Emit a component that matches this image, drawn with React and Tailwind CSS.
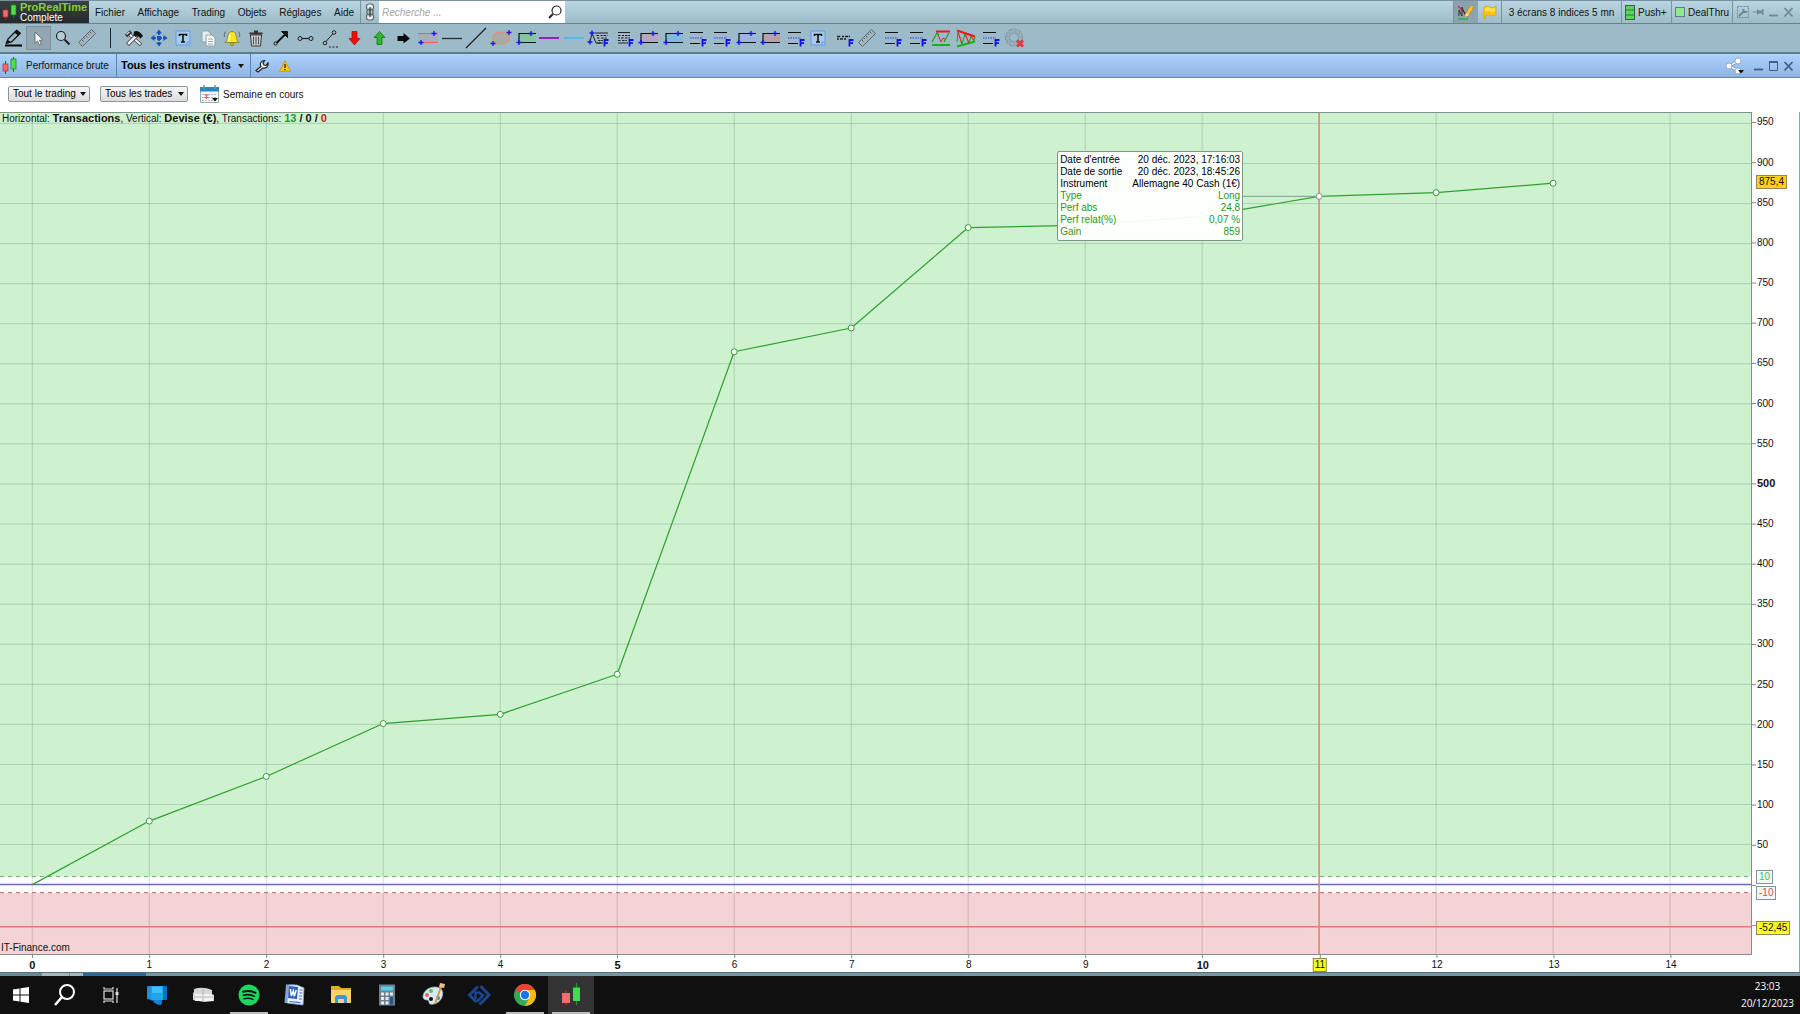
import { useState } from 'react'

const POINTS = [0, 79.3, 135, 201, 212.5, 262.5, 665, 694.7, 820, 823, 834, 859, 863.6, 875.4]
const Y_TICKS = [950, 900, 850, 800, 750, 700, 650, 600, 550, 500, 450, 400, 350, 300, 250, 200, 150, 100, 50]
const X_TICKS = [0, 1, 2, 3, 4, 5, 6, 7, 8, 9, 10, 11, 12, 13, 14]
const Y_MAX = 963
const Y_MIN = -86.6
const SELECTED = 11

const xPct = (n) => `${1.845 + n * 6.681}%`
const yPct = (v) => `${((Y_MAX - v) / (Y_MAX - Y_MIN)) * 100}%`

const MENUS = ['Fichier', 'Affichage', 'Trading', 'Objets', 'Réglages', 'Aide']

const TRADE = [
  ["Date d'entrée", '20 déc. 2023, 17:16:03', false],
  ['Date de sortie', '20 déc. 2023, 18:45:26', false],
  ['Instrument', 'Allemagne 40 Cash (1€)', false],
  ['Type', 'Long', true],
  ['Perf abs', '24,8', true],
  ['Perf relat(%)', '0,07 %', true],
  ['Gain', '859', true],
]

function Icon({ children }) {
  return (
    <svg viewBox="0 0 22 20" className="h-5 w-[22px] shrink-0 overflow-visible" fill="none" aria-hidden="true">
      {children}
    </svg>
  )
}

function Candles({ className }) {
  return (
    <svg viewBox="0 0 16 18" className={className} aria-hidden="true">
      <path d="M3.500 4v13" stroke="#8f2a2a" />
      <rect x="1" y="7" width="5" height="7" fill="#f06a6a" stroke="#a33" strokeWidth=".7" />
      <path d="M11.500 0v15" stroke="#1d7a1d" />
      <rect x="9" y="2" width="5" height="10" fill="#4fe04f" stroke="#197a19" strokeWidth=".7" />
    </svg>
  )
}

// small blue cross marking an anchor of a drawing object
const Cross = ({ x, y }) => <path d={`M${x - 2.5} ${y}h5M${x} ${y - 2.5}v5`} stroke="#1414f0" strokeWidth="1.300" />

const LetterF = () => <path d="M17.500 18.500v-6.500h4M17.500 15.200h3.500" stroke="#1010f0" strokeWidth="1.800" />

const Fibo = () => (
  <Icon>
    <path d="M5 4.500h13M5 15.500h10" stroke="#111" strokeWidth="1.200" />
    <path d="M5 10h13" stroke="#3a3af0" strokeDasharray="1.500 1" />
    <LetterF />
  </Icon>
)

const TextF = () => (
  <Icon>
    <path d="M6 4.500h12M6 15h10" stroke="#222" />
    <path d="M6 7.500h3m1 0h2m1 0h5M6 10h2m1 0h3m1 0h5M6 12.500h3m1 0h5" stroke="#222" strokeDasharray="2.500 .8" />
    <LetterF />
  </Icon>
)

const Box = ({ fill }) => (
  <Icon>
    <rect x="5" y="5.500" width="17" height="9" fill={fill} />
    <path d="M22 5.500H5v9M5 14.500h17" stroke="#111" strokeWidth="1.200" />
    <Cross x={17} y={5.5} />
    <Cross x={5} y={14.5} />
  </Icon>
)

const TextBox = () => (
  <Icon>
    <path d="M4 3h14v14H4zM15 17v-3h3" fill="#a9cbe8" stroke="#5c9af0" />
    <path d="M7.500 8V6.500h7V8M11 6.500V14M9 14h4" stroke="#111" strokeWidth="1.600" />
  </Icon>
)

const Ruler = () => (
  <Icon>
    <path d="M2.500 14.500 15.500 1.500l4 4L6.500 18.500z" fill="#a5b4bc" stroke="#5b6b75" />
    <path d="m5.500 11.500 2 2m0-4 1.300 1.300m.7-3.300 2 2m0-4 1.300 1.300m.7-3.300 2 2" stroke="#4d5c66" />
  </Icon>
)

const TOOLS = [
  ['Dessiner', <Icon><path d="M2 17.500h17" stroke="#000" strokeWidth="2" /><path d="m3.500 15 1.500-4L13.500 2.500 17 5.500 8.500 14z" fill="#9db8c4" stroke="#111" strokeWidth="1.300" /><path d="m3 16 1.500-4.500 3.500 3z" fill="#111" /><path d="m11.500 4.500 3.500 3L18 5l-4-3z" fill="#111" /></Icon>],
  ['Sélection', <Icon><path d="m7 4 8 8-3.600.3 2 4-2 .9-1.900-4.100L7 15.500z" fill="#f5f5f5" stroke="#666" strokeWidth=".9" /></Icon>],
  ['Zoom', <Icon><circle cx="9" cy="8" r="4.500" fill="#b5cdd8" stroke="#222" strokeWidth="1.200" /><path d="m12.500 11.500 5 5" stroke="#222" strokeWidth="2" /></Icon>],
  ['Règle', <Ruler />],
  null,
  ['Outils', <Icon><path d="m5 5 13 12" stroke="#444" strokeWidth="3.500" /><path d="m5 5 12.500 11.500" stroke="#eee" strokeWidth="2" /><path d="M4.500 16.500 14 7" stroke="#333" strokeWidth="4" /><path d="M5 16 13 8" stroke="#eee" strokeWidth="2.500" /><path d="M3 8 8 3.500" stroke="#333" strokeWidth="3.500" /><path d="M3.500 6.500 6.500 4" stroke="#ddd" strokeWidth="1.200" /><path d="M11 3.500c3-1.500 6 0 9 4.500l-2.500 2.500-3-3-2 1.500-2-2z" fill="#111" /></Icon>],
  ['Déplacer', <Icon><path d="M11 5v10M6 10h10" stroke="#123f9c" strokeWidth="1.500" strokeDasharray="2 1" /><path d="m11 1.500 3 4H8zM11 18.500l3-4H8zM2.500 10l4-3v6zM19.500 10l-4-3v6z" fill="#1453bd" /><rect x="9" y="8" width="4" height="4" fill="#1453bd" /></Icon>],
  ['Texte', <TextBox />],
  ['Copier', <Icon><path d="M5 3h6l3 3v8H5z" fill="#e8eef0" stroke="#93a2a8" /><path d="M9 7h6l3 3v8H9z" fill="#f5f7f8" stroke="#93a2a8" /><path d="M11 11h5m-5 2.500h5M11 16h5" stroke="#9aa" /></Icon>],
  ['Alerte', <Icon><path d="M4.500 3.500Q2.500 6 3.500 9M17.500 3.500Q19.500 6 18.500 9" stroke="#58707a" /><path d="M4 14.500c2.500-2 2-4 3-7.500.7-2.500 2-3.500 4-3.500s3.300 1 4 3.500c1 3.500.5 5.500 3 7.500z" fill="#f6e52b" stroke="#8b7a0e" strokeWidth=".8" /><path d="M9 7c-.7 2-.4 4-1.500 6" stroke="#fffac0" strokeWidth="1.500" /><circle cx="11" cy="16.200" r="1.600" fill="#d4b312" stroke="#7d6e12" strokeWidth=".6" /></Icon>],
  ['Supprimer', <Icon><path d="M5.500 7h11l-1 11h-9z" fill="#d9d9d9" stroke="#333" /><path d="M8.500 8.500v8M11 8.500v8M13.500 8.500v8" stroke="#555" strokeWidth="1.200" /><path d="M4.500 5.500h13M9 3.500h4" stroke="#333" strokeWidth="2" /></Icon>],
  ['Flèche', <Icon><path d="M6 15.500 15 6.500" stroke="#111" strokeWidth="1.800" /><path d="M17.500 3.500v6l-6-6z" fill="#111" stroke="#111" /><circle cx="5.500" cy="15.500" r="1.600" fill="#9dbac6" stroke="#111" /></Icon>],
  ['Segment', <Icon><path d="M7 10.500h9" stroke="#222" strokeWidth="1.200" /><circle cx="6" cy="10.500" r="2" fill="#9dbac6" stroke="#222" /><circle cx="17" cy="10.500" r="2" fill="#9dbac6" stroke="#222" /></Icon>],
  ['Demi-droite', <Icon><path d="m7 13.500 7-8" stroke="#222" /><circle cx="6" cy="15" r="1.800" fill="#9dbac6" stroke="#222" /><circle cx="15" cy="4.500" r="1.800" fill="#9dbac6" stroke="#222" /><path d="M10 19h10" stroke="#222" strokeDasharray="2 1.500" /></Icon>],
  ['Flèche baissière', <Icon><path d="M9 3.500h5v7h3L11.500 17 6 10.500h3z" fill="#f80808" stroke="#a41515" strokeWidth=".8" /></Icon>],
  ['Flèche haussière', <Icon><path d="M9 16.500h5v-7h3L11.500 3.500 6 9.500h3z" fill="#2fb52f" stroke="#176f17" strokeWidth=".8" /></Icon>],
  ['Flèche neutre', <Icon><path d="M5.500 8h6V5l6.500 5.500-6.500 5V13h-6z" fill="#0a0a0a" /></Icon>],
  ['Canal', <Icon><path d="M2 5.500h20v9H2z" fill="#a9acba" /><path d="M2 5.500h20M2 14.500h20" stroke="#ee5a62" /><Cross x={18} y={5.5} /><Cross x={5} y={14.5} /></Icon>],
  ['Ligne horizontale', <Icon><path d="M1 10.500h20" stroke="#333" strokeWidth="1.300" /></Icon>],
  ['Ligne oblique', <Icon><path d="M1 20 21 0" stroke="#222" strokeWidth="1.200" /></Icon>],
  ['Ellipse', <Icon><ellipse cx="11" cy="10" rx="8.500" ry="6" fill="#a9abab" stroke="#f08c66" strokeWidth="1.200" /><Cross x={19} y={4.5} /><Cross x={3} y={15.5} /></Icon>],
  ['Rectangle vert', <Box fill="#84c5a6" />],
  ['Ligne violette', <Icon><path d="M1 10h20" stroke="#9410c8" strokeWidth="1.800" /></Icon>],
  ['Ligne bleue', <Icon><path d="M1 10h20" stroke="#45b7f5" strokeWidth="1.500" /></Icon>],
  ['Fourchette', <Icon><path d="M3 14 5 5l4 10h5M8 5h13M10 15h6" stroke="#222" /><path d="M9.500 7.500h3m1 0h2m1 0h4M10 10h3m1 0h6M11 12.500h5" stroke="#222" strokeDasharray="2.500 .8" /><Cross x={5} y={5} /><Cross x={3} y={14} /><LetterF /></Icon>],
  ['Texte de Fibonacci', <TextF />],
  ['Rectangle rose', <Box fill="#b5a6c2" />],
  ['Rectangle bleu', <Box fill="#83bad8" />],
  ['Retracement', <Fibo />],
  ['Extension', <Fibo />],
  ['Zone bleue', <Box fill="#9eb5df" />],
  ['Zone rouge', <Box fill="#b5a2aa" />],
  ['Projection', <Fibo />],
  ['Note', <TextBox />],
  ['Repères', <Icon><path d="M5 8.500h4m1 0h2m1 0h5M5 11h2m1 0h3m1 0h2" stroke="#222" strokeDasharray="3 .7" strokeWidth="1.300" /><LetterF /></Icon>],
  ['Mesure', <Ruler />],
  ['Niveaux 1', <Fibo />],
  ['Niveaux 2', <Fibo />],
  ['Canal détecté', <Icon><path d="M7 3.500h14" stroke="#f01414" strokeWidth="2" /><path d="M3 17h18" stroke="#14b414" strokeWidth="2" /><path d="m3 14 5-9 2 2M15 14l5-9" stroke="#1ca01c" strokeWidth="1.200" /><path d="m9 7 3 7 2-4 2 1" stroke="#e02828" /></Icon>],
  ['Triangle détecté', <Icon><path d="m3 2.500 18 6" stroke="#f01414" strokeWidth="2" /><path d="m3 18.500 18-5" stroke="#14b414" strokeWidth="2" /><path d="m4 4 4 12M11 6l4 9M17 8l3 5" stroke="#e02828" strokeWidth="1.200" /><path d="m3 14 1-10M8 16l3-10M15 15l2-7M20 13l1-4" stroke="#1ca01c" /></Icon>],
  ['Niveaux 3', <Fibo />],
  ['Réinitialiser', <Icon><circle cx="11" cy="9.500" r="6.500" stroke="#7d929b" strokeWidth="5" strokeDasharray="3 .6" /><circle cx="11" cy="9.500" r="6.500" stroke="#9bb2bd" strokeWidth="3.500" strokeDasharray="2.600 1" /><path d="m14 12.500 6 6m0-6-6 6" stroke="#e23a44" strokeWidth="3" /></Icon>],
]

function Dropdown({ label, className }) {
  return (
    <div className={`relative flex items-center ${className}`}>
      <select
        aria-label={label}
        className="h-4 w-full appearance-none rounded-xs border border-[#8b959b] bg-linear-to-b from-[#f6f6f6] to-[#dcdcdc] pl-1 text-[10px] leading-[14px] text-black"
      >
        <option>{label}</option>
      </select>
      <svg viewBox="0 0 6 4" className="pointer-events-none absolute right-1 h-1 w-1.5">
        <path d="M0 0h6L3 4z" fill="#111" />
      </svg>
    </div>
  )
}

function MenuBar() {
  return (
    <header className="flex h-6 shrink-0 items-stretch border-t border-b border-t-[#7a929d] border-b-[#68828e] bg-linear-to-b from-[#b9d6e2] to-[#9dbbc8]">
      <div className="flex w-[89px] items-center gap-0.5 bg-linear-to-b from-[#3a4145] to-[#24292c] pl-0.5">
        <Candles className="h-[18px] w-4" />
        <div className="leading-[11px]">
          <div className="text-[11px] font-bold leading-[11px] text-[#86d02c]">ProRealTime</div>
          <div className="text-[10px] leading-[10px] text-white">Complete</div>
        </div>
      </div>
      <nav className="flex w-[272px] items-center justify-between border-r border-[#7794a0] px-1.5">
        {MENUS.map((m) => (
          <button key={m} type="button">{m}</button>
        ))}
      </nav>
      <button type="button" aria-label="Lier" className="flex w-[18px] items-center justify-center">
        <svg viewBox="0 0 10 18" className="h-[18px] w-2.5" fill="none" stroke="#666" strokeWidth="1.200">
          <rect x="1.500" y="1" width="7" height="6" rx="2.500" fill="#e8eef1" />
          <rect x="1.500" y="11" width="7" height="6" rx="2.500" fill="#e8eef1" />
          <rect x="2" y="6" width="6" height="6" rx="2" />
          <path d="M5 4v10" stroke="#333" />
        </svg>
      </button>
      <label className="relative flex w-[186px] items-center bg-white">
        <input
          type="text"
          aria-label="Recherche"
          placeholder="Recherche ..."
          className="h-full w-full bg-transparent pl-[3px] text-[10px] italic outline-none placeholder:text-[#a5a5a5]"
        />
        <svg viewBox="0 0 14 14" className="absolute right-[3px] h-3.5 w-3.5" fill="none" stroke="#222">
          <circle cx="8.500" cy="5.500" r="4.500" strokeWidth="1.200" />
          <path d="M5 9 1 13" strokeWidth="2" />
        </svg>
      </label>

      <div className="ml-auto flex items-stretch">
        <button type="button" aria-label="Dessin" className="flex w-6 items-center justify-center border-l border-[#7794a0] bg-[#8aa3af]">
          <svg viewBox="0 0 18 18" className="h-[18px] w-[18px]" fill="none">
            <path d="M1 3 11 13" stroke="#e02b35" strokeWidth="1.500" />
            <path d="M2 13V7l3 6V4l4 10" stroke="#333" />
            <path d="M1 16h10" stroke="#28b34a" strokeWidth="1.500" />
            <path d="m8 14 1-4 5-8 3 2-5 8z" fill="#f7c52e" stroke="#b5801c" strokeWidth=".7" />
            <path d="m8 14 1-4 3 2z" fill="#f7e5c0" />
          </svg>
        </button>
        <button type="button" aria-label="Messages" className="flex w-6 items-center justify-center border-l border-[#8aa6b2]">
          <svg viewBox="0 0 16 16" className="h-4 w-4">
            <path d="M2 3q3-2 6 0t6-1v9q-3 2-6 .5T3 12v3H2z" fill="#ffc20a" stroke="#d89a00" strokeWidth=".5" />
            <path d="M3 4q3-1.500 5 0t5-.5v4q-3 1-5 0T3 8z" fill="#ffe24a" />
          </svg>
        </button>
        <button type="button" className="w-[120px] border-l border-[#7794a0]">3 écrans 8 indices 5 mn</button>
        <button type="button" className="flex w-[50px] items-center gap-[3px] border-l border-[#7794a0] pl-[3px]">
          <svg viewBox="0 0 10 15" className="h-[15px] w-2.5 shrink-0">
            <rect x=".5" y=".5" width="9" height="14" fill="#52db52" stroke="#3c5968" />
            <path d="M1 5h8M1 10h8" stroke="#267d38" />
          </svg>
          Push+
        </button>
        <button type="button" className="flex w-[61px] items-center gap-[3px] border-l border-[#7794a0] pl-[3px]">
          <span className="h-2.5 w-2.5 shrink-0 border border-[#5f7b88] bg-[#8eea8e]" />
          DealThru
        </button>
        <div className="flex w-[68px] items-center gap-1 border-l border-[#7794a0] pl-1 text-[#708892]">
          <button type="button" aria-label="Options">
            <svg viewBox="0 0 12 12" className="h-3 w-3" fill="none" stroke="currentColor">
              <rect x=".5" y=".5" width="11" height="11" strokeDasharray="2 1" />
              <path d="m2 10 5-5M6 3l1 3 3 0" strokeWidth="2" />
            </svg>
          </button>
          <button type="button" aria-label="Épingler">
            <svg viewBox="0 0 11 12" className="h-3 w-[11px]"><path d="M0 5.500h4V3l2 1.500h3V3h1.500v6H9V7.500H6L4 9V6.500H0z" fill="currentColor" /></svg>
          </button>
          <WindowGlyphs />
        </div>
      </div>
    </header>
  )
}

function WindowGlyphs({ maximize = false }) {
  return (
    <>
      <button type="button" aria-label="Réduire">
        <svg viewBox="0 0 11 12" className="h-3 w-[11px]"><path d="M1 9.500h9" stroke="currentColor" strokeWidth="1.800" /></svg>
      </button>
      {maximize && (
        <button type="button" aria-label="Agrandir">
          <svg viewBox="0 0 11 12" className="h-3 w-[11px]" fill="none" stroke="currentColor"><path d="M1.500 2v8.500h8V2" /><path d="M1 2h9" strokeWidth="2" /></svg>
        </button>
      )}
      <button type="button" aria-label="Fermer">
        <svg viewBox="0 0 11 12" className="h-3 w-[11px]"><path d="m1.500 2 8 8.500m0-8.500-8 8.500" stroke="currentColor" strokeWidth="1.800" /></svg>
      </button>
    </>
  )
}

function Toolbar() {
  const [active, setActive] = useState('Sélection')
  return (
    <div className="h-[30px] shrink-0 border-b-2 border-[#5d7b8a] bg-[#9cbac7] pl-0.5">
      <div className="flex h-7 w-[1024px] items-center">
        {TOOLS.map((tool, i) =>
          tool ? (
            <button
              key={tool[0]}
              type="button"
              aria-label={tool[0]}
              onClick={() => setActive(tool[0])}
              className={`flex h-6 min-w-0 flex-1 items-center justify-center border ${active === tool[0] ? 'border-[#7e929b] bg-[#91a6b0]' : 'border-transparent'}`}
            >
              {tool[1]}
            </button>
          ) : (
            <span key={i} className="flex flex-1 justify-center">
              <span className="h-5 w-px bg-[#222]" />
            </span>
          ),
        )}
      </div>
    </div>
  )
}

function TitleBar() {
  return (
    <div className="flex h-6 shrink-0 items-stretch border-b border-[#6684a8] bg-linear-to-b from-[#abd3fc] to-[#8fb4e4]">
      <h1 className="flex w-[117px] items-center gap-2 border-r border-[#6482a8] pl-0.5">
        <Candles className="h-[18px] w-4" />
        Performance brute
      </h1>
      <div className="relative flex w-[134px] items-center border-r border-[#6482a8]">
        <select aria-label="Instruments" className="h-full w-full appearance-none pl-1 text-[11px] font-bold text-black">
          <option>Tous les instruments</option>
        </select>
        <svg viewBox="0 0 6 4" className="pointer-events-none absolute right-1.5 h-1 w-1.5">
          <path d="M0 0h6L3 4z" fill="#111" />
        </svg>
      </div>
      <button type="button" aria-label="Paramètres" className="flex w-[22px] items-center justify-center">
        <svg viewBox="0 0 14 14" className="h-3.5 w-3.5">
          <path d="M1 11.500 6 7.500C4.500 5 6 1.500 9.500 1.500L8 4l1 2 2 .3L13 4c.5 3.500-2 5.500-5 5L3 13z" fill="#f7f7f7" stroke="#222" strokeWidth="1.200" />
        </svg>
      </button>
      <button type="button" aria-label="Avertissement" className="flex w-6 items-center justify-center">
        <svg viewBox="0 0 12 12" className="h-3 w-3">
          <path d="M6 .8 11.500 11.300H.5z" fill="#ffc825" stroke="#c98b12" strokeWidth=".8" />
          <path d="M6 4v4M6 9v1.300" stroke="#222" strokeWidth="1.300" />
        </svg>
      </button>
      <div className="ml-auto flex items-center gap-1 pr-1.5 text-[#3f5f86]">
        <button type="button" aria-label="Partager" className="mr-1">
          <svg viewBox="0 0 20 18" className="h-[18px] w-5">
            <path d="M13.500 4 4 9l9 4.500" stroke="#6c8bad" strokeWidth="3" fill="none" />
            <path d="M13.500 4 4 9l9 4.500" stroke="#fff" strokeWidth="1.600" fill="none" />
            <circle cx="13" cy="4" r="3" fill="#fff" stroke="#7c95ae" strokeWidth=".7" />
            <circle cx="4" cy="9" r="3" fill="#fff" stroke="#7c95ae" strokeWidth=".7" />
            <circle cx="13" cy="14" r="3" fill="#fff" stroke="#7c95ae" strokeWidth=".7" />
            <path d="M13 13h6l-3 3.500z" fill="#111" />
          </svg>
        </button>
        <WindowGlyphs maximize />
      </div>
    </div>
  )
}

function FilterBar() {
  return (
    <div className="flex h-[34px] shrink-0 items-center bg-white pb-0.5 pl-2">
      <Dropdown label="Tout le trading" className="w-[82px]" />
      <Dropdown label="Tous les trades" className="ml-2.5 w-[88px]" />
      <button type="button" className="ml-3 flex items-center gap-1">
        <svg viewBox="0 0 19 18" className="h-[18px] w-[19px]">
          <rect x=".5" y="2.500" width="18" height="15" fill="#f4f8fa" stroke="#9aabb3" />
          <path d="M0 2h19v4.500H0z" fill="#2588c0" />
          <path d="M4 0v4M15 0v4" stroke="#7a8e98" strokeWidth="1.500" />
          <path d="M2 9.500h14M2 12.500h14M2 15.500h14" stroke="#aebcc3" strokeDasharray="2 1" />
          <path d="M4.500 10h4M4.500 12.500h4M6.500 9v5" stroke="#ef5a5a" strokeWidth="1.200" />
          <path d="M12 13h6l-3 3.500z" fill="#111" />
        </svg>
        Semaine en cours
      </button>
    </div>
  )
}

function Plot() {
  return (
    <div className="relative overflow-hidden border-t border-r border-b border-[#81928c]">
      <svg className="absolute inset-0 h-full w-full" role="img" aria-label="Performance brute">
        <rect width="100%" height={yPct(10)} fill="#cef2cf" />
        <rect y={yPct(-10)} width="100%" height="10%" fill="#f3d3d3" />
        {Y_TICKS.map((v) => (
          <line key={v} x1="0" x2="100%" y1={yPct(v)} y2={yPct(v)} stroke="#2c4440" strokeOpacity=".2" />
        ))}
        {X_TICKS.map((n) => (
          <line key={n} x1={xPct(n)} x2={xPct(n)} y1="0" y2="100%" stroke="#2c4440" strokeOpacity=".2" />
        ))}
        <line x1="0" x2="100%" y1={yPct(10)} y2={yPct(10)} stroke="#5cb85c" strokeDasharray="4 4" />
        <line x1="0" x2="100%" y1={yPct(-10)} y2={yPct(-10)} stroke="#c46070" strokeDasharray="4 4" />
        <line x1="0" x2="100%" y1={yPct(0)} y2={yPct(0)} stroke="#6a6cba" strokeWidth="1.500" />
        <line x1="0" x2="100%" y1={yPct(-52.45)} y2={yPct(-52.45)} stroke="#e07a78" strokeWidth="1.500" />
        <line x1={xPct(SELECTED)} x2={xPct(SELECTED)} y1="0" y2="100%" stroke="#e58572" strokeWidth="1.500" />
        {POINTS.slice(1).map((v, i) => (
          <line key={i} x1={xPct(i)} y1={yPct(POINTS[i])} x2={xPct(i + 1)} y2={yPct(v)} stroke="#2fa02f" strokeWidth="1.200" />
        ))}
        <svg x={xPct(SELECTED)} y={yPct(POINTS[SELECTED])} className="overflow-visible">
          <path d="M-76 0H0" stroke="#7f9c94" />
        </svg>
        {POINTS.map((v, i) => i > 0 && <circle key={i} cx={xPct(i)} cy={yPct(v)} r="3" fill="#fff" stroke={i === SELECTED ? '#80948c' : '#2fa02f'} />)}
      </svg>
      <p className="relative pl-0.5 leading-[11px] [&_b]:text-[11px]">
        Horizontal: <b>Transactions</b>, Vertical: <b>Devise (€)</b>, Transactions: <b className="text-[#1f9a1f]">13</b>
        <b> / 0 / </b>
        <b className="text-[#c42222]">0</b>
      </p>
      <div className="absolute bottom-0 left-px leading-3">IT-Finance.com</div>
      <div
        className="absolute w-[186px] -translate-x-[262px] -translate-y-1/2 rounded-xs border border-[#7f958c] bg-white/95 px-0.5 py-0.5"
        style={{ left: xPct(SELECTED), top: yPct(POINTS[SELECTED]) }}
      >
        <table className="w-full leading-3">
          <tbody>
            {TRADE.map(([name, value, green]) => (
              <tr key={name} className={green ? 'text-[#259a25]' : 'text-black'}>
                <th scope="row" className="text-left font-normal">{name}</th>
                <td className="text-right">{value}</td>
              </tr>
            ))}
          </tbody>
        </table>
      </div>
    </div>
  )
}

function Badge({ value, className, children }) {
  return (
    <span className={`absolute left-1 -translate-y-1/2 border px-0.5 leading-3 ${className}`} style={{ top: yPct(value) }}>
      {children}
    </span>
  )
}

function Chart() {
  return (
    <main className="grid min-h-0 flex-1 grid-cols-[1fr_47px] grid-rows-[1fr_17px] border-r border-[#8fa3ad] bg-white">
      <Plot />
      <div className="relative">
        <svg className="absolute inset-0 h-full w-full text-[10px]">
          {[...Y_TICKS, 0, -50].map((v) => (
            <line key={v} x1="0" x2="4" y1={yPct(v)} y2={yPct(v)} stroke="#7c8c88" />
          ))}
          {Y_TICKS.map((v) => (
            <text key={v} x="5" y={yPct(v)} dy="3" fill="#111" className={v === 500 ? 'text-[11px] font-bold' : ''}>{v}</text>
          ))}
        </svg>
        <Badge value={875.4} className="border-[#8b8b5c] bg-[#fdd116]">875,4</Badge>
        <Badge value={10} className="border-[#7b95a0] bg-[#f4f7f4] text-[#52bd52]">10</Badge>
        <Badge value={-10} className="border-[#7b95a0] bg-[#f4f4f4] text-[#d05060]">-10</Badge>
        <Badge value={-52.45} className="border-[#8b8b5c] bg-[#fbfb1e]">-52,45</Badge>
      </div>
      <div className="relative">
        {X_TICKS.map((n) => (
          <div key={n} className="absolute top-0 flex -translate-x-1/2 flex-col items-center" style={{ left: xPct(n) }}>
            <span className="h-[3px] w-px bg-[#7c8c88]" />
            <span className={n === SELECTED ? 'border border-[#8b8b5c] bg-[#fbfb1e] px-px leading-3' : n % 5 === 0 ? 'text-[11px] font-bold leading-[14px]' : 'leading-[14px]'}>
              {n}
            </span>
          </div>
        ))}
      </div>
    </main>
  )
}

const TASKS = [
  ['Recherche', <><circle cx="14" cy="9" r="7" fill="none" stroke="#fff" strokeWidth="2" /><path d="m9 14-7 8" stroke="#fff" strokeWidth="2.500" /></>],
  ['Vue des tâches', <g fill="none" stroke="#ddd" strokeWidth="1.200"><rect x="5" y="8" width="9" height="8" /><path d="M4.500 6h10M4.500 18h10M5 4v2m9-2v2M5 18v2m9-2v2M18 5v15" /><path d="M18 9v3" strokeWidth="3" /></g>],
  ['Bureau', <><path d="M2 3h20v14h-5v4l-4 1-5-4-6-2z" fill="#0b6fc2" /><path d="M4 3h8v13H2V5z" fill="#1a92e4" /><path d="M6 3h12v14H6z" fill="#20a6f0" /><path d="M7 4h10v6H7z" fill="#43bff8" /><path d="M9 17h7v5l-7-2z" fill="#1583d4" /></>],
  ['Canapé', <><path d="M3 6q9-3 18 1v4l2 1v6l-10 1-11-2v-7l1-1z" fill="#d7d7d7" /><path d="M4 11h16l2 2v5H4z" fill="#f2f2f2" /><path d="M12 6v7M3 14h19M12 14v5" stroke="#a8a8a8" strokeWidth=".8" /></>],
  ['Spotify', <><circle cx="12" cy="12" r="10.500" fill="#1ed760" /><g fill="none" stroke="#111" strokeLinecap="round"><path d="M6 8.800q7-2 12.500 1" strokeWidth="2" /><path d="M6.500 12.300q6-1.600 10.700 1" strokeWidth="1.700" /><path d="M7 15.700q5-1.300 9 .8" strokeWidth="1.400" /></g></>],
  ['Word', <><path d="M3 1.500h9L8 20H1.500z" fill="#7fa4dc" /><path d="M6 2h8l7 3-1 17-16-2z" fill="#e9f0fb" stroke="#87a7d8" strokeWidth=".8" /><path d="M6 3 15 4l-1 12-9-1z" fill="#315fb2" /><path d="m7.500 6 .8 7 2-5 1 5.300L13.200 7" fill="none" stroke="#fff" strokeWidth="1.500" /><path d="M16.500 7h3m-3.200 3h3m-3.200 3h3m-3.200 3h3M6.500 18.500l11 1.200" stroke="#4772bd" strokeWidth="1.200" /></>],
  ['Explorateur', <><path d="M2 3h8l2 2h10v15H2z" fill="#e5a926" /><path d="M2 7h20v13H2z" fill="#fbd468" /><path d="M6 20v-6l2-2h8l2 2v6h-3v-4H9v4z" fill="#3d98d8" /></>],
  ['Calculatrice', <><rect x="4" y="1.500" width="16" height="21" fill="#71808e" /><path d="M6 3.500h12v4H6z" fill="#53d0ef" /><path d="M6 9.500h3v3H6zm4.500 0h3v3h-3zm4.500 0h3v3h-3zM6 14h3v3H6zm4.500 0h3v3h-3zM6 18.500h3v3H6zm4.500 0h3v3h-3z" fill="#e4ebef" /><path d="M15 14h3v7.500h-3z" fill="#24558c" /></>],
  ['Paint', <><path d="M2 14C2 8 8 4 14 4c7 0 9 5 7 10-2 6-9 8-12 7-2-1 0-4-3-4-2 0-4-1-4-3z" fill="#d9e9f3" stroke="#9fb9c9" strokeWidth=".7" /><circle cx="6" cy="12" r="2" fill="#ee6644" /><circle cx="10" cy="8" r="2" fill="#5bc257" /><circle cx="17" cy="15" r="2" fill="#3d80e6" /><circle cx="10" cy="16" r="2" fill="#111" /><path d="m14 21 6-17" stroke="#d99a48" strokeWidth="2" /><path d="m18 4 1-4 5 1-1 4z" fill="#eac08b" /></>],
  ['Terminal', <g fill="none" stroke="#1a458f" strokeWidth="3"><path d="M11 3.500 2.500 12l7 7" /><path d="M13.500 3 22 12l-9.500 9.500" /><path d="M8.500 16V9.500h3.500l4 3-6 6" strokeWidth="2.500" /></g>],
  ['Chrome', <><circle cx="12" cy="12" r="11" fill="#34a853" /><path d="M12 7h9.800A11 11 0 0 1 12 23l4.300-8.500z" fill="#fbbc05" /><path d="M2.500 6.500A11 11 0 0 1 21.800 7H12a5 5 0 0 0-4.500 3z" fill="#ea4335" /><circle cx="12" cy="12" r="5.200" fill="#fff" /><circle cx="12" cy="12" r="4.200" fill="#1a73e8" /></>],
  ['ProRealTime', <><path d="M7 7v15" stroke="#a33a3a" strokeWidth="1.200" /><rect x="3" y="10" width="8" height="10" fill="#f26d6d" /><path d="M17.500 0v22" stroke="#2c8c3c" strokeWidth="1.200" /><rect x="14" y="4.500" width="7" height="13.500" fill="#3fdd4c" /></>],
]

function Taskbar() {
  return (
    <footer className="flex h-[38px] shrink-0 items-stretch bg-[#101010]">
      <button type="button" aria-label="Démarrer" className="flex w-[42px] items-center justify-center">
        <svg viewBox="0 0 16 16" className="h-4 w-4" fill="#fff">
          <path d="M0 2.500 6.500 1.500V7.500H0zM7.500 1.300 16 0v7.500H7.500zM0 8.500h6.500v6L0 13.500zM7.500 8.500H16V16l-8.500-1.300z" />
        </svg>
      </button>
      {TASKS.map(([name, art]) => {
        const open = name === 'Spotify' || name === 'Chrome' || name === 'ProRealTime'
        return (
          <button
            key={name}
            type="button"
            aria-label={name}
            className={`relative flex w-[46px] items-center justify-center ${name === 'ProRealTime' ? 'bg-[#333]' : ''}`}
          >
            <svg viewBox="0 0 24 24" className="h-6 w-6 overflow-visible">{art}</svg>
            {open && <span className="absolute inset-x-1 bottom-0 h-0.5 bg-[#bdbdbd]" />}
          </button>
        )
      })}
      <div className="ml-auto flex flex-col justify-center pr-1.5 text-center font-['Open_Sans',sans-serif] leading-[17px] text-white">
        <time>23:03</time>
        <time>20/12/2023</time>
      </div>
    </footer>
  )
}

export default function App() {
  return (
    <div className="flex h-screen flex-col bg-white font-['Liberation_Sans',Arial,sans-serif] text-[10px] text-[#111]">
      <MenuBar />
      <Toolbar />
      <TitleBar />
      <FilterBar />
      <Chart />
      <div className="flex h-1 shrink-0 border-t border-[#56717d] bg-[#7796a2]">
        <span className="w-[42px] bg-[#6a8a98]" />
        <span className="w-7 border-r border-[#7b8e96] bg-[#a8b6bc]" />
        <span className="w-[13px] bg-[#a8b6bc]" />
        <span className="w-[63px] bg-[#256c9c]" />
      </div>
      <Taskbar />
    </div>
  )
}
